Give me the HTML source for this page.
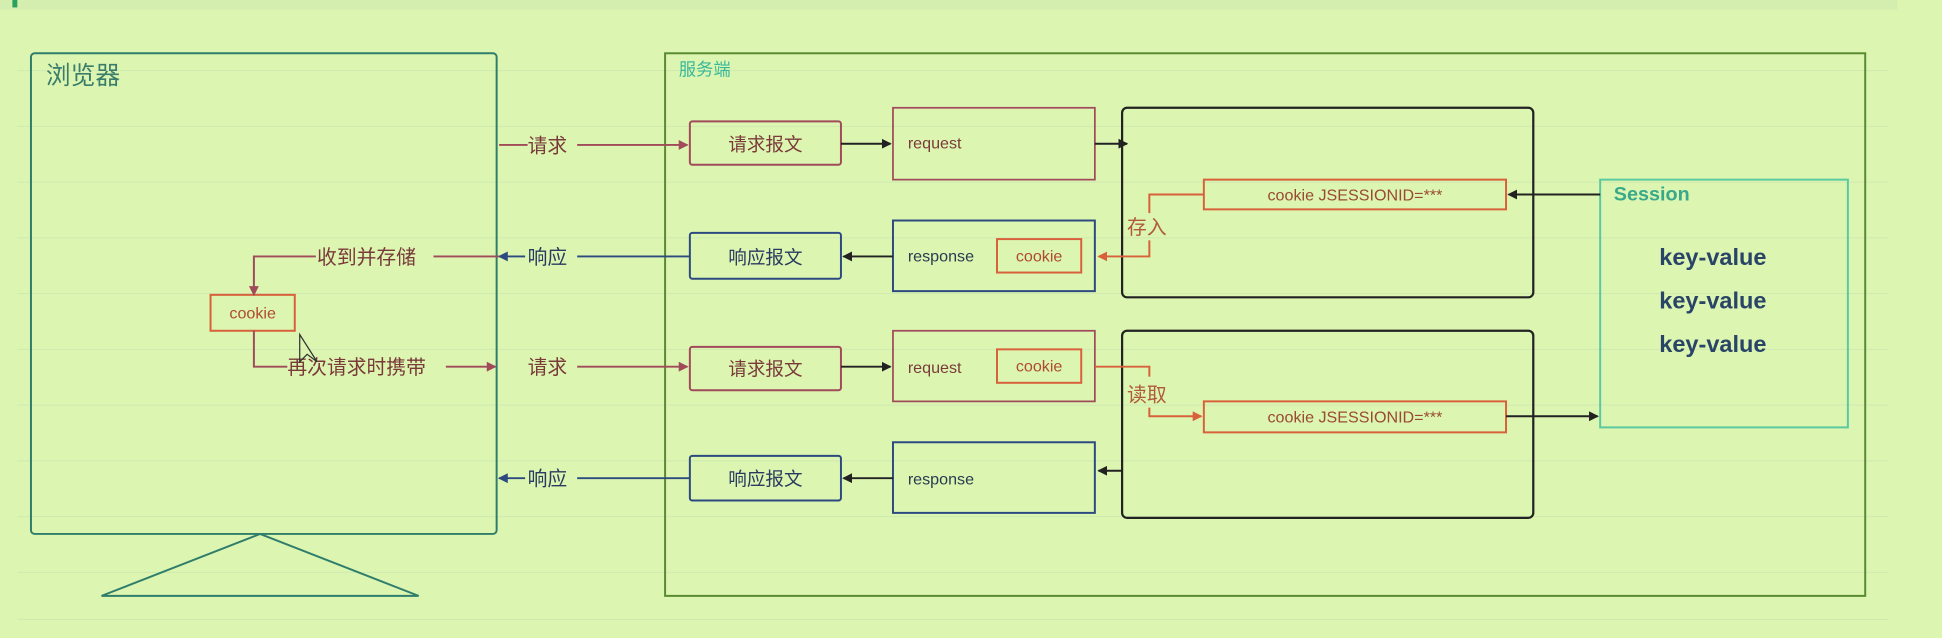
<!DOCTYPE html>
<html><head><meta charset="utf-8"><style>
html,body{margin:0;padding:0;background:#dcf6b2;}
svg{display:block}
text{font-family:"Liberation Sans","Noto Sans CJK SC",sans-serif;}
</style></head><body>
<svg width="1942" height="638" viewBox="0 0 1568 515" preserveAspectRatio="none" xmlns="http://www.w3.org/2000/svg">
<defs>
<marker id="ak" markerWidth="8" markerHeight="8" refX="7" refY="4" orient="auto" markerUnits="userSpaceOnUse"><path d="M0,0 L8,4 L0,8 Z" fill="#222"/></marker>
<marker id="ar" markerWidth="8" markerHeight="8" refX="7" refY="4" orient="auto" markerUnits="userSpaceOnUse"><path d="M0,0 L8,4 L0,8 Z" fill="#a04a5a"/></marker>
<marker id="ab" markerWidth="8" markerHeight="8" refX="7" refY="4" orient="auto" markerUnits="userSpaceOnUse"><path d="M0,0 L8,4 L0,8 Z" fill="#2c4a80"/></marker>
<marker id="ao" markerWidth="8" markerHeight="8" refX="7" refY="4" orient="auto" markerUnits="userSpaceOnUse"><path d="M0,0 L8,4 L0,8 Z" fill="#d8603a"/></marker>
</defs>
<rect x="0" y="0" width="1568" height="515" fill="#dcf6b2"/>
<rect x="0" y="0" width="1532" height="8" fill="#d3eeae"/>
<rect x="10" y="0" width="4" height="6" fill="#2aa060"/>
<g stroke="#cfe8b0" stroke-width="0.8">
<line x1="14" y1="57" x2="1525" y2="57"/><line x1="14" y1="102" x2="1525" y2="102"/><line x1="14" y1="147" x2="1525" y2="147"/>
<line x1="14" y1="192" x2="1525" y2="192"/><line x1="14" y1="237" x2="1525" y2="237"/><line x1="14" y1="282" x2="1525" y2="282"/>
<line x1="14" y1="327" x2="1525" y2="327"/><line x1="14" y1="372" x2="1525" y2="372"/><line x1="14" y1="417" x2="1525" y2="417"/>
<line x1="14" y1="462" x2="1525" y2="462"/><line x1="14" y1="500" x2="1525" y2="500"/>
</g>
<!-- browser -->
<rect x="25" y="43" width="376" height="388" rx="3" fill="none" stroke="#2f7d6a" stroke-width="1.6"/>
<text x="37" y="68" font-size="20" fill="#3a7d6a">浏览器</text>
<path d="M210,431 L82,481 L338,481 Z" fill="none" stroke="#2f7d6a" stroke-width="1.6"/>
<!-- server -->
<rect x="537" y="43" width="969" height="438" fill="none" stroke="#5a8a30" stroke-width="1.6"/>
<text x="548" y="61" font-size="14" fill="#3ab89a">服务端</text>
<!-- big black boxes -->
<rect x="906" y="87" width="332" height="153" rx="4" fill="none" stroke="#222" stroke-width="1.8"/>
<rect x="906" y="267" width="332" height="151" rx="4" fill="none" stroke="#222" stroke-width="1.8"/>
<!-- row1 -->
<rect x="557" y="98" width="122" height="35" rx="2" fill="none" stroke="#a04a5a" stroke-width="1.6"/>
<text x="618" y="122" font-size="15" fill="#7a3a3a" text-anchor="middle">请求报文</text>
<rect x="721" y="87" width="163" height="58" fill="none" stroke="#a04a5a" stroke-width="1.4"/>
<text x="733" y="120" font-size="13" fill="#7a3a3a">request</text>
<rect x="972" y="145" width="244" height="24" fill="none" stroke="#d8603a" stroke-width="1.6"/>
<text x="1094" y="162" font-size="13" fill="#9a4a30" text-anchor="middle">cookie   JSESSIONID=***</text>
<rect x="1292" y="145" width="200" height="200" fill="none" stroke="#5cc8a0" stroke-width="1.6"/>
<text x="1303" y="162" font-size="16" font-weight="bold" fill="#3aa88a">Session</text>
<text x="1383" y="214" font-size="19" font-weight="bold" fill="#2a4468" text-anchor="middle">key-value</text>
<text x="1383" y="249" font-size="19" font-weight="bold" fill="#2a4468" text-anchor="middle">key-value</text>
<text x="1383" y="284" font-size="19" font-weight="bold" fill="#2a4468" text-anchor="middle">key-value</text>
<rect x="557" y="188" width="122" height="37" rx="2" fill="none" stroke="#2c4a80" stroke-width="1.6"/>
<text x="618" y="213" font-size="15" fill="#2a3a60" text-anchor="middle">响应报文</text>
<rect x="721" y="178" width="163" height="57" fill="none" stroke="#2c4a80" stroke-width="1.6"/>
<text x="733" y="211" font-size="13" fill="#2a3a50">response</text>
<rect x="805" y="193" width="68" height="27" fill="none" stroke="#d8603a" stroke-width="1.6"/>
<text x="839" y="211" font-size="13" fill="#b04a30" text-anchor="middle">cookie</text>
<rect x="170" y="238" width="68" height="29" fill="none" stroke="#d8603a" stroke-width="1.6"/>
<text x="204" y="257" font-size="13" fill="#b04a30" text-anchor="middle">cookie</text>
<!-- row2 -->
<rect x="557" y="280" width="122" height="35" rx="2" fill="none" stroke="#a04a5a" stroke-width="1.6"/>
<text x="618" y="303" font-size="15" fill="#7a3a3a" text-anchor="middle">请求报文</text>
<rect x="721" y="267" width="163" height="57" fill="none" stroke="#a04a5a" stroke-width="1.4"/>
<text x="733" y="301" font-size="13" fill="#7a3a3a">request</text>
<rect x="805" y="282" width="68" height="27" fill="none" stroke="#d8603a" stroke-width="1.6"/>
<text x="839" y="300" font-size="13" fill="#b04a30" text-anchor="middle">cookie</text>
<rect x="972" y="324" width="244" height="25" fill="none" stroke="#d8603a" stroke-width="1.6"/>
<text x="1094" y="341" font-size="13" fill="#9a4a30" text-anchor="middle">cookie   JSESSIONID=***</text>
<rect x="557" y="368" width="122" height="36" rx="2" fill="none" stroke="#2c4a80" stroke-width="1.6"/>
<text x="618" y="392" font-size="15" fill="#2a3a60" text-anchor="middle">响应报文</text>
<rect x="721" y="357" width="163" height="57" fill="none" stroke="#2c4a80" stroke-width="1.6"/>
<text x="733" y="391" font-size="13" fill="#2a3a50">response</text>
<!-- arrows -->
<g fill="none" stroke-width="1.6">
<line x1="403" y1="117" x2="426" y2="117" stroke="#a04a5a"/>
<line x1="466" y1="117" x2="555" y2="117" stroke="#a04a5a" marker-end="url(#ar)"/>
<line x1="679" y1="116" x2="719" y2="116" stroke="#222" marker-end="url(#ak)"/>
<line x1="884" y1="116" x2="910" y2="116" stroke="#222" marker-end="url(#ak)"/>
<line x1="1292" y1="157" x2="1218" y2="157" stroke="#222" marker-end="url(#ak)"/>
<path d="M972,157 H928 V172 M928,194 V207 H887" stroke="#d8603a" marker-end="url(#ao)"/>
<line x1="557" y1="207" x2="466" y2="207" stroke="#2c4a80"/>
<line x1="424" y1="207" x2="403" y2="207" stroke="#2c4a80" marker-end="url(#ab)"/>
<path d="M403,207 H350 M255,207 H205 V238" stroke="#a04a5a" marker-end="url(#ar)"/>
<line x1="721" y1="207" x2="681" y2="207" stroke="#222" marker-end="url(#ak)"/>
<path d="M205,267 V296 H232" stroke="#a04a5a"/>
<line x1="360" y1="296" x2="400" y2="296" stroke="#a04a5a" marker-end="url(#ar)"/>
<line x1="466" y1="296" x2="555" y2="296" stroke="#a04a5a" marker-end="url(#ar)"/>
<line x1="679" y1="296" x2="719" y2="296" stroke="#222" marker-end="url(#ak)"/>
<path d="M884,296 H928 V304 M928,329 V336 H970" stroke="#d8603a" marker-end="url(#ao)"/>
<line x1="1216" y1="336" x2="1290" y2="336" stroke="#222" marker-end="url(#ak)"/>
<line x1="557" y1="386" x2="466" y2="386" stroke="#2c4a80"/>
<line x1="424" y1="386" x2="403" y2="386" stroke="#2c4a80" marker-end="url(#ab)"/>
<line x1="721" y1="386" x2="681" y2="386" stroke="#222" marker-end="url(#ak)"/>
<line x1="906" y1="380" x2="887" y2="380" stroke="#222" marker-end="url(#ak)"/>
</g>
<g font-size="16" fill="#7a3a3a">
<text x="426" y="123">请求</text>
<text x="426" y="302">请求</text>
<text x="256" y="213">收到并存储</text>
<text x="232" y="302">再次请求时携带</text>
</g>
<g font-size="16" fill="#2a3a60">
<text x="426" y="213">响应</text>
<text x="426" y="392">响应</text>
</g>
<text x="910" y="189" font-size="16" fill="#b05a3a">存入</text>
<text x="910" y="324" font-size="16" fill="#b05a3a">读取</text>
<path d="M242,270 L242,292 L248,286 L256,292 Z" fill="none" stroke="#333" stroke-width="1"/>
</svg>
</body></html>
